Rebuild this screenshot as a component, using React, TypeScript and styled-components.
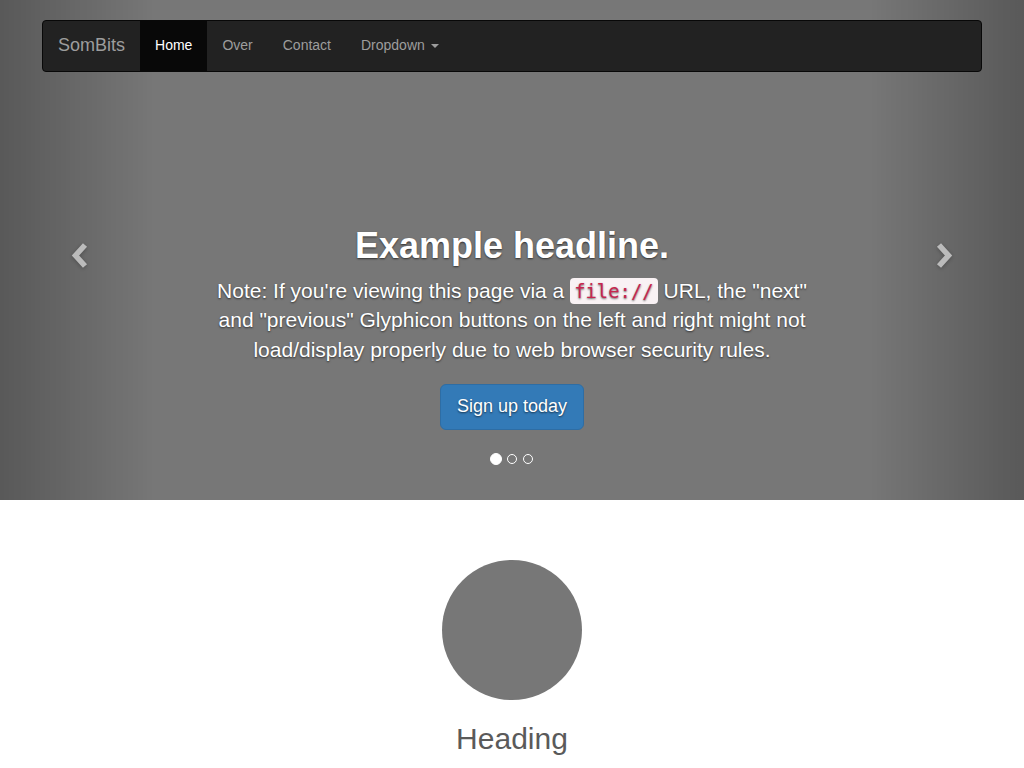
import React from 'react';
import styled, { createGlobalStyle } from 'styled-components';

const GlobalStyle = createGlobalStyle`
    * {
        box-sizing: border-box;
    }
    body {
        margin: 0;
        padding-bottom: 40px;
        font-family: "Liberation Sans", Helvetica, Arial, sans-serif;
        font-size: 14px;
        line-height: 1.42857;
        color: #5a5a5a;
        background: #fff;
    }
`;

const App = () => {
    return (
        <>
            <GlobalStyle />
            <NavbarWrapper>
                <Container>
                    <Navbar>
                        <Brand href="#">SomBits</Brand>
                        <NavList>
                            <NavItem $active href="#">Home</NavItem>
                            <NavItem href="#about">Over</NavItem>
                            <NavItem href="#contact">Contact</NavItem>
                            <NavItem href="#">
                                Dropdown <Caret />
                            </NavItem>
                        </NavList>
                    </Navbar>
                </Container>
            </NavbarWrapper>

            {/* carousel */}
            <Carousel>
                <Caption>
                    <Headline>Example headline.</Headline>
                    <Lead>
                        Note: If you're viewing this page via a <Code>file://</Code> URL, the "next" and
                        "previous" Glyphicon buttons on the left and right might not load/display properly due to
                        web browser security rules.
                    </Lead>
                    <Lead>
                        <PrimaryButton href="#">Sign up today</PrimaryButton>
                    </Lead>
                </Caption>

                <Indicators>
                    <Dot $active />
                    <Dot />
                    <Dot />
                </Indicators>

                <Control $side="left" href="#">
                    <Chevron $side="left" viewBox="0 0 30 30">
                        <polyline points="18,5 8.5,15.5 18,26" />
                    </Chevron>
                </Control>
                <Control $side="right" href="#">
                    <Chevron $side="right" viewBox="0 0 30 30">
                        <polyline points="12,5 21.5,15.5 12,26" />
                    </Chevron>
                </Control>
            </Carousel>

            {/* marketing columns */}
            <Marketing>
                {[0, 1, 2].map((i) => (
                    <Column key={i}>
                        <Circle />
                        <Heading>Heading</Heading>
                        <Text>
                            Donec sed odio dui. Etiam porta sem malesuada magna mollis euismod. Nullam id dolor id
                            nibh ultricies vehicula ut id elit. Morbi leo risus, porta ac consectetur ac, vestibulum
                            at eros. Praesent commodo cursus magna.
                        </Text>
                        <Text>
                            <DefaultButton href="#">View details &raquo;</DefaultButton>
                        </Text>
                    </Column>
                ))}
            </Marketing>
        </>
    );
};

const NavbarWrapper = styled.div`
    position: absolute;
    top: 0;
    left: 0;
    right: 0;
    z-index: 20;
    margin-top: 20px;
`;

const Container = styled.div`
    width: 970px;
    margin: 0 auto;
    padding: 0 15px;
`;

const Navbar = styled.nav`
    display: flex;
    align-items: stretch;
    min-height: 50px;
    background-color: #222;
    border: 1px solid #080808;
    border-radius: 4px;
`;

const Brand = styled.a`
    display: block;
    height: 50px;
    padding: 14px 15px 16px;
    font-size: 18px;
    line-height: 20px;
    color: #9d9d9d;
    text-decoration: none;
`;

const NavList = styled.div`
    display: flex;
`;

const NavItem = styled.a<{ $active?: boolean }>`
    display: block;
    padding: 14px 15px 16px;
    line-height: 20px;
    color: ${(p) => (p.$active ? '#fff' : '#9d9d9d')};
    background-color: ${(p) => (p.$active ? '#080808' : 'transparent')};
    text-decoration: none;
`;

const Caret = styled.span`
    display: inline-block;
    width: 0;
    height: 0;
    margin-left: 2px;
    vertical-align: middle;
    border-top: 4px dashed;
    border-right: 4px solid transparent;
    border-left: 4px solid transparent;
`;

const Carousel = styled.div`
    position: relative;
    height: 500px;
    margin-bottom: 60px;
    background-color: #777;
    overflow: hidden;
`;

const Caption = styled.div`
    position: absolute;
    left: 20%;
    right: 20%;
    bottom: 20px;
    z-index: 10;
    padding-top: 20px;
    padding-bottom: 30px;
    color: #fff;
    text-align: center;
    text-shadow: 0 1px 2px rgba(0, 0, 0, 0.6);
`;

const Headline = styled.h1`
    margin: 20px 0 10px;
    font-size: 36px;
    font-weight: 700;
    line-height: 1.1;
`;

const Lead = styled.p`
    margin: 0 0 20px;
    font-size: 21px;
    line-height: 1.4;
`;

const Code = styled.code`
    padding: 2px 4px;
    font-family: "DejaVu Sans Mono", Menlo, Consolas, monospace;
    font-size: 90%;
    color: #c7254e;
    background-color: #f9f2f4;
    border-radius: 4px;
`;

const PrimaryButton = styled.a`
    display: inline-block;
    padding: 10px 16px;
    font-size: 18px;
    line-height: 1.3333;
    color: #fff;
    background-color: #337ab7;
    border: 1px solid #2e6da4;
    border-radius: 6px;
    text-decoration: none;
`;

const Indicators = styled.div`
    position: absolute;
    left: 20%;
    right: 20%;
    bottom: 35px;
    z-index: 15;
    height: 12px;
    display: flex;
    justify-content: center;
    align-items: center;
    gap: 4px;
`;

const Dot = styled.span<{ $active?: boolean }>`
    display: block;
    width: ${(p) => (p.$active ? '12px' : '10px')};
    height: ${(p) => (p.$active ? '12px' : '10px')};
    margin: ${(p) => (p.$active ? '0' : '1px')};
    border: 1px solid #fff;
    border-radius: 10px;
    background-color: ${(p) => (p.$active ? '#fff' : 'transparent')};
`;

const Control = styled.a<{ $side: 'left' | 'right' }>`
    position: absolute;
    top: 0;
    bottom: 0;
    ${(p) => p.$side}: 0;
    width: 15%;
    color: #fff;
    opacity: 0.5;
    background-image: linear-gradient(
        ${(p) => (p.$side === 'left' ? 'to right' : 'to left')},
        rgba(0, 0, 0, 0.5) 0,
        rgba(0, 0, 0, 0.0001) 100%
    );
`;

const Chevron = styled.svg<{ $side: 'left' | 'right' }>`
    position: absolute;
    top: 50%;
    ${(p) => p.$side}: 50%;
    width: 30px;
    height: 30px;
    margin-top: -10px;
    margin-${(p) => p.$side}: -10px;
    fill: none;
    stroke: currentColor;
    stroke-width: 5.5;
    stroke-linejoin: miter;
    filter: drop-shadow(0 1px 2px rgba(0, 0, 0, 0.6));
`;

const Marketing = styled.div`
    width: 970px;
    margin: 0 auto;
    padding: 0 15px;
`;

const Column = styled.div`
    margin-bottom: 20px;
    text-align: center;
`;

const Circle = styled.div`
    width: 140px;
    height: 140px;
    margin: 0 auto;
    border-radius: 50%;
    background-color: #777;
`;

const Heading = styled.h2`
    margin: 22px 0 10px;
    font-size: 30px;
    font-weight: 400;
    line-height: 1.1;
`;

const Text = styled.p`
    margin: 0 10px 10px;
`;

const DefaultButton = styled.a`
    display: inline-block;
    padding: 6px 12px;
    color: #333;
    background-color: #fff;
    border: 1px solid #ccc;
    border-radius: 4px;
    text-decoration: none;
`;

export default App;
